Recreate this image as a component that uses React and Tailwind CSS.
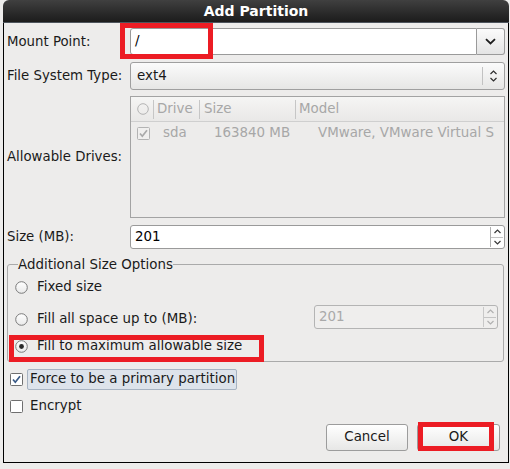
import React from "react";

const font = "font-['DejaVu_Sans','Liberation_Sans',sans-serif]";

function Radio({ checked, disabled }) {
  return (
    <svg width="13" height="13" viewBox="0 0 13 13" className="shrink-0">
      <defs>
        <linearGradient id="rg" x1="0" y1="0" x2="0" y2="1">
          <stop offset="0" stopColor="#ffffff" />
          <stop offset="1" stopColor="#e9e9e9" />
        </linearGradient>
      </defs>
      <circle cx="6.5" cy="6.5" r="5.8" fill={disabled ? "none" : "url(#rg)"} stroke={disabled ? "#b5b5b5" : "#7a7a7a"} strokeWidth="1" />
      {checked && <circle cx="6.5" cy="6.5" r="2.4" fill="#2a2a2a" />}
    </svg>
  );
}

function Check({ checked, disabled }) {
  return (
    <svg width="13" height="13" viewBox="0 0 13 13" className="shrink-0">
      <rect x="0.5" y="0.5" width="12" height="12" rx="1" fill={disabled ? "#f0efee" : "#ffffff"} stroke={disabled ? "#b3b3b3" : "#6f6f6f"} />
      {checked && (
        <path d="M3 6.5 L5.3 9.2 L10 3.2" fill="none" stroke={disabled ? "#a9a9a9" : "#3a5a86"} strokeWidth="1.7" />
      )}
    </svg>
  );
}

function SpinArrows({ disabled }) {
  const c = disabled ? "#b0b0b0" : "#3a3a3a";
  return (
    <div className={`w-[13px] h-full flex flex-col border-l ${disabled ? "border-[#c8c8c8]" : "border-[#b0b0b0]"}`}>
      <div className="flex-1 flex items-center justify-center border-b border-[#c4c4c4]">
        <svg width="7" height="5" viewBox="0 0 7 5">
          <path d="M0.5 4 L3.5 1 L6.5 4" fill="none" stroke={c} strokeWidth="1.2" />
        </svg>
      </div>
      <div className="flex-1 flex items-center justify-center">
        <svg width="7" height="5" viewBox="0 0 7 5">
          <path d="M0.5 1 L3.5 4 L6.5 1" fill="none" stroke={c} strokeWidth="1.2" />
        </svg>
      </div>
    </div>
  );
}

function Row({ label, className, children }) {
  return (
    <div className={`flex items-center ${className}`}>
      <div className="w-[123px] shrink-0 text-[13.3px] text-[#1a1a1a]">{label}</div>
      {children}
    </div>
  );
}

export default function App() {
  return (
    <div className={`w-[510px] h-[469px] bg-[#edeceb] overflow-hidden ${font}`}>
      <div className="ml-[3px] w-[506px] h-[463px] flex flex-col">
        {/* Title bar */}
        <div className="h-[23px] shrink-0 rounded-t-[6px] bg-gradient-to-b from-[#404040] to-[#1c1c1c] border-b border-[#4d545c] flex items-center justify-center">
          <span className="text-white font-bold text-[14px] leading-none">Add Partition</span>
        </div>

        {/* Body */}
        <div className="relative flex-1 border-l border-r border-b border-black bg-[#edeceb] px-[3px] flex flex-col">
          <Row label="Mount Point:" className="mt-[5px] h-[27px]">
            <div className="flex flex-1 h-full">
              <div className="flex-1 bg-white border border-[#9a9a9a] rounded-l-[3px] flex items-center pl-[4px] text-[13.4px]">/</div>
              <div className="w-[28px] border border-l-0 border-[#9a9a9a] rounded-r-[3px] bg-gradient-to-b from-[#fbfbfb] to-[#e4e4e4] flex items-center justify-center">
                <svg width="11" height="7" viewBox="0 0 11 7">
                  <path d="M1 1.2 L5.5 5.5 L10 1.2" fill="none" stroke="#1e1e1e" strokeWidth="1.8" />
                </svg>
              </div>
            </div>
          </Row>

          <Row label="File System Type:" className="mt-[7px] h-[28px]">
            <div className="flex flex-1 h-full border border-[#9f9f9f] rounded-[3px] bg-gradient-to-b from-[#fbfbfb] to-[#e6e6e5] items-center">
              <span className="flex-1 pl-[6px] text-[13.4px] text-[#1a1a1a]">ext4</span>
              <div className="w-px h-[18px] bg-[#c2c2c2]" />
              <div className="w-[21px] flex flex-col items-center gap-[2px]">
                <svg width="7" height="5" viewBox="0 0 7 5">
                  <path d="M0.5 4 L3.5 1 L6.5 4" fill="none" stroke="#2e2e2e" strokeWidth="1.2" />
                </svg>
                <svg width="7" height="5" viewBox="0 0 7 5">
                  <path d="M0.5 1 L3.5 4 L6.5 1" fill="none" stroke="#2e2e2e" strokeWidth="1.2" />
                </svg>
              </div>
            </div>
          </Row>

          <Row label="Allowable Drives:" className="mt-[6px] h-[122px]">
            <div className="flex-1 h-full border border-[#a3a3a3] bg-[#edeceb] flex flex-col text-[13.4px] text-[#a7a7a7] overflow-hidden">
              <div className="h-[25px] shrink-0 flex items-center bg-gradient-to-b from-[#f5f5f4] to-[#e9e8e7] border-b border-[#cfcfcf]">
                <div className="w-[22px] pl-[6px] flex items-center">
                  <svg width="12" height="12" viewBox="0 0 12 12">
                    <circle cx="6" cy="6" r="5.3" fill="none" stroke="#b3b3b3" />
                  </svg>
                </div>
                <div className="w-px h-[19px] bg-[#c6c6c6]" />
                <div className="w-[45px] pl-[3px]">Drive</div>
                <div className="w-px h-[19px] bg-[#c6c6c6]" />
                <div className="w-[95px] pl-[4px]">Size</div>
                <div className="w-px h-[19px] bg-[#c6c6c6]" />
                <div className="pl-[3px]">Model</div>
              </div>
              <div className="h-[20px] mt-[1px] flex items-center whitespace-nowrap">
                <div className="w-[32px] pl-[6px] flex items-center">
                  <Check checked disabled />
                </div>
                <div className="w-[51px]">sda</div>
                <div className="w-[104px]">163840 MB</div>
                <div>VMware, VMware Virtual S</div>
              </div>
            </div>
          </Row>

          <Row label="Size (MB):" className="mt-[7px] h-[24px]">
            <div className="flex flex-1 h-full bg-white border border-[#9a9a9a] rounded-[3px] overflow-hidden">
              <span className="flex-1 pl-[4px] flex items-center text-[13.4px]">201</span>
              <div className="py-[1px] pr-[1px] h-full">
                <SpinArrows />
              </div>
            </div>
          </Row>

          <fieldset className="mt-[8px] mr-[1px] border border-[#aaaaaa] rounded-[3px] pl-[7px] pr-[5px] pb-[5px] pt-0 text-[13.4px] text-[#1a1a1a]">
            <legend className="ml-[3px] px-0 leading-[15px]">Additional Size Options</legend>
            <div className="mt-[5px] h-[20px] flex items-center gap-[9px]">
              <Radio />
              <span>Fixed size</span>
            </div>
            <div className="mt-[8px] h-[24px] flex items-center">
              <div className="flex items-center gap-[9px] w-[299px] pt-[4px]">
                <Radio />
                <span>Fill all space up to (MB):</span>
              </div>
              <div className="flex flex-1 h-full bg-[#efeeed] border border-[#b4b4b4] rounded-[3px] overflow-hidden">
                <span className="flex-1 pl-[4px] flex items-center text-[#a9a9a9]">201</span>
                <div className="py-[1px] pr-[1px] h-full">
                  <SpinArrows disabled />
                </div>
              </div>
            </div>
            <div className="mt-[7px] h-[20px] flex items-center gap-[9px]">
              <Radio checked />
              <span>Fill to maximum allowable size</span>
            </div>
          </fieldset>

          <div className="mt-[7px] h-[21px] ml-[3px] flex items-center gap-[4px] text-[13.4px] text-[#1a1a1a]">
            <Check checked />
            <span className="h-full flex items-center pl-[2px] pr-[1px] bg-[#dde3eb] border border-[#a7b3c2] rounded-[2px]">Force to be a primary partition</span>
          </div>
          <div className="mt-[6px] h-[21px] ml-[3px] flex items-center gap-[7px] text-[13.4px] text-[#1a1a1a]">
            <Check />
            <span>Encrypt</span>
          </div>

          <div className="mt-[7px] mr-[5px] flex justify-end gap-[9px]">
            <button className="w-[82px] h-[27px] border border-[#9c9c9c] rounded-[3px] bg-gradient-to-b from-[#ffffff] to-[#e7e7e6] text-[13.4px] text-[#1a1a1a]">Cancel</button>
            <button className="w-[83px] h-[27px] border border-[#9c9c9c] rounded-[3px] bg-gradient-to-b from-[#ffffff] to-[#e7e7e6] text-[13.4px] text-[#1a1a1a]">OK</button>
          </div>

          {/* annotation boxes drawn over the dialog */}
          <div className="absolute left-[116px] top-[0px] w-[93px] h-[36px] border-[5px] border-[#ec1c24]" />
          <div className="absolute left-[5px] top-[312px] w-[255px] h-[27px] border-[5px] border-[#ec1c24]" />
          <div className="absolute left-[414px] top-[399px] w-[76px] h-[29px] border-[5px] border-[#ec1c24]" />
        </div>
      </div>
    </div>
  );
}
